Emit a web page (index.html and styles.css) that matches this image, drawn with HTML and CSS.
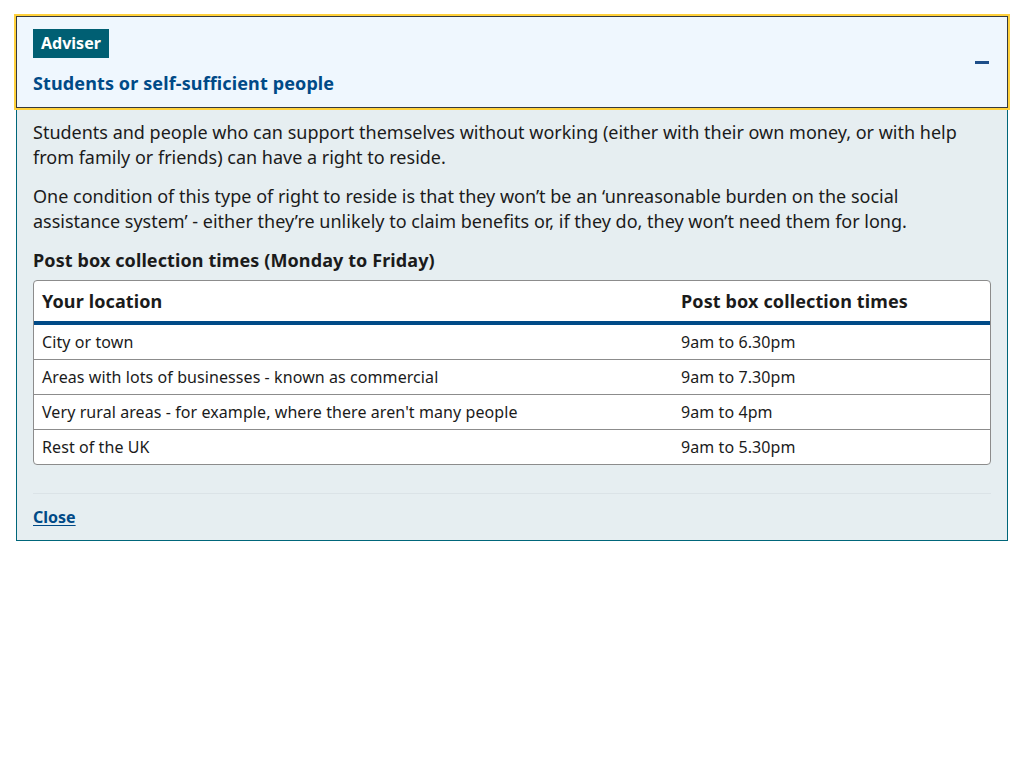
FILE: index.html
```html
<!DOCTYPE html>
<html lang="en">
<head>
<meta charset="utf-8">
<title>Students or self-sufficient people</title>
<link rel="stylesheet" href="styles.css">
</head>
<body>
<div class="details">
  <button class="summary" type="button">
    <span class="summary-text">
      <span class="badge">Adviser</span>
      <span class="title">Students or self-sufficient people</span>
    </span>
    <span class="minus" aria-hidden="true"></span>
  </button>
  <div class="content">
    <p class="para">Students and people who can support themselves without working (either with their own money, or with help from family or friends) can have a right to reside.</p>
    <p class="para">One condition of this type of right to reside is that they won’t be an ‘unreasonable burden on the social assistance system’ - either they’re unlikely to claim benefits or, if they do, they won’t need them for long.</p>
    <h3 class="caption">Post box collection times (Monday to Friday)</h3>
    <div class="table-wrap">
      <table class="times">
        <thead>
          <tr><th class="col-loc">Your location</th><th>Post box collection times</th></tr>
        </thead>
        <tbody>
          <tr><td>City or town</td><td>9am to 6.30pm</td></tr>
          <tr><td>Areas with lots of businesses - known as commercial</td><td>9am to 7.30pm</td></tr>
          <tr><td>Very rural areas - for example, where there aren't many people</td><td>9am to 4pm</td></tr>
          <tr><td>Rest of the UK</td><td>9am to 5.30pm</td></tr>
        </tbody>
      </table>
    </div>
    <div class="footer">
      <a class="close" href="#">Close</a>
    </div>
  </div>
</div>
</body>
</html>
```

FILE: styles.css
```css
html, body {
  margin: 0;
  padding: 0;
  background: #ffffff;
}
body {
  padding: 16px;
  font-family: "Noto Sans", "Open Sans", sans-serif;
  color: #1b1b1b;
}
.details {
  width: 992px;
}
.summary {
  display: flex;
  align-items: center;
  justify-content: space-between;
  width: 100%;
  box-sizing: border-box;
  height: 92px;
  margin: 0;
  padding: 12px 18px 11px 16px;
  background: #eff7fe;
  border: 1px solid #35393d;
  outline: 2px solid #ffd13c;
  font-family: inherit;
  text-align: left;
  cursor: pointer;
}
.summary-text {
  display: flex;
  flex-direction: column;
  align-items: flex-start;
  gap: 13px;
}
.badge {
  display: inline-block;
  background: #005f73;
  color: #ffffff;
  font-weight: 700;
  font-size: 16px;
  line-height: 29px;
  height: 29px;
  padding: 0 8px;
}
.title {
  color: #004a87;
  font-weight: 700;
  font-size: 18px;
  line-height: 25px;
  letter-spacing: 0.12px;
}
.minus {
  display: block;
  width: 14px;
  height: 3px;
  background: #1d4e89;
}
.content {
  background: #e6eef1;
  border: 1px solid #00667a;
  border-top: none;
  padding: 12px 16px 11px 16px;
}
.para {
  margin: 0 0 14px;
  max-width: 950px;
  font-size: 18px;
  line-height: 25px;
}
.caption {
  margin: 1px 0 7px;
  font-size: 18px;
  line-height: 25px;
  font-weight: 700;
  letter-spacing: 0.1px;
}
.table-wrap {
  background: #ffffff;
  border: 1px solid #8c8c8c;
  border-radius: 4px;
  overflow: hidden;
}
.times {
  width: 100%;
  border-collapse: collapse;
  font-size: 16px;
}
.times th {
  text-align: left;
  font-weight: 700;
  font-size: 18px;
  line-height: 25px;
  letter-spacing: 0.12px;
  padding: 8px 8px 7px;
  border-bottom: 4px solid #004a87;
}
.times .col-loc {
  width: 623px;
}
.times td {
  line-height: 22px;
  letter-spacing: 0.08px;
  padding: 6px 8px 6px;
  border-top: 1px solid #8c8c8c;
}
.times tbody tr:first-child td {
  border-top: none;
}
.footer {
  margin-top: 28px;
  border-top: 1px solid #dbe3e7;
  padding-top: 11px;
}
.close {
  color: #004a87;
  font-weight: 700;
  font-size: 16px;
  line-height: 24px;
  text-decoration: underline;
  text-underline-offset: 2px;
}
```
